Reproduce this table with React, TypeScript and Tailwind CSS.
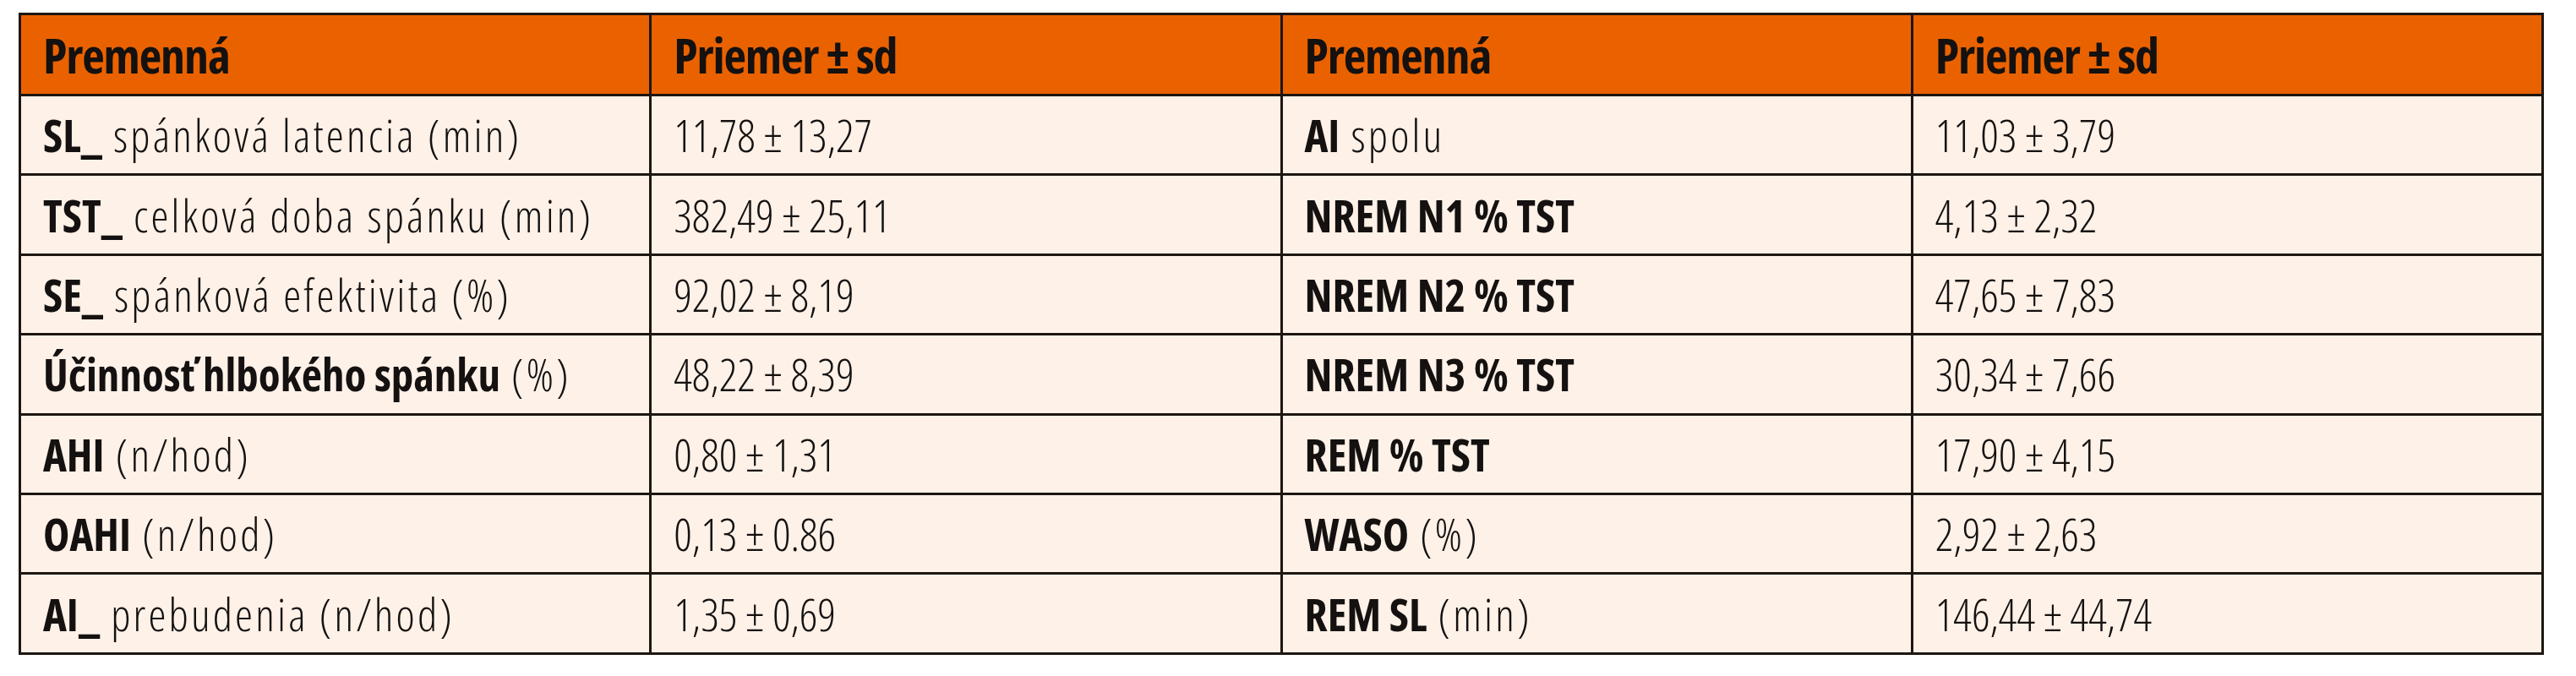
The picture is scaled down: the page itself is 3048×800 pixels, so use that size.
type Row = { label: [string, string]; value: string; label2: [string, string]; value2: string }

const rows: Row[] = [
  { label: ["SL_", " spánková latencia (min)"], value: "11,78 ± 13,27", label2: ["AI", " spolu"], value2: "11,03 ± 3,79" },
  { label: ["TST_", " celková doba spánku (min)"], value: "382,49 ± 25,11", label2: ["NREM N1 % TST", ""], value2: "4,13 ± 2,32" },
  { label: ["SE_", " spánková efektivita (%)"], value: "92,02 ± 8,19", label2: ["NREM N2 % TST", ""], value2: "47,65 ± 7,83" },
  { label: ["Účinnosť hlbokého spánku", " (%)"], value: "48,22 ± 8,39", label2: ["NREM N3 % TST", ""], value2: "30,34 ± 7,66" },
  { label: ["AHI", " (n/hod)"], value: "0,80 ± 1,31", label2: ["REM % TST", ""], value2: "17,90 ± 4,15" },
  { label: ["OAHI", " (n/hod)"], value: "0,13 ± 0.86", label2: ["WASO", " (%)"], value2: "2,92 ± 2,63" },
  { label: ["AI_", " prebudenia (n/hod)"], value: "1,35 ± 0,69", label2: ["REM SL", " (min)"], value2: "146,44 ± 44,74" },
]

function Label({ parts }: { parts: [string, string] }) {
  return (
    <span className="whitespace-pre">
      <span className="font-bold">{parts[0]}</span>
      <span className="font-light tracking-[0.06em]">{parts[1]}</span>
    </span>
  )
}

const th = "border-[3px] border-[#1d1611] pl-[26px] text-left align-middle font-bold text-[58px] tracking-[-0.02em]"
const td = "border-[3px] border-[#1d1611] pl-[26px] text-left align-middle"

export default function App() {
  return (
    <div className="w-[3048px] h-[800px] bg-white pt-[15px] pl-[22px] [font-family:'Open_Sans',sans-serif] font-stretch-condensed text-[#141110]">
      <table className="w-[2988px] border-collapse table-fixed text-[53px] leading-none">
        <thead>
          <tr className="h-[96px] bg-[#ea6200]">
            <th className={th}>Premenná</th>
            <th className={th}>Priemer ± sd</th>
            <th className={th}>Premenná</th>
            <th className={th}>Priemer ± sd</th>
          </tr>
        </thead>
        <tbody className="bg-[#fdf1e8]">
          {rows.map((r) => (
            <tr key={r.value} className="h-[94.4px]">
              <td className={td}>
                <Label parts={r.label} />
              </td>
              <td className={`${td} font-light`}>{r.value}</td>
              <td className={td}>
                <Label parts={r.label2} />
              </td>
              <td className={`${td} font-light`}>{r.value2}</td>
            </tr>
          ))}
        </tbody>
      </table>
    </div>
  )
}
